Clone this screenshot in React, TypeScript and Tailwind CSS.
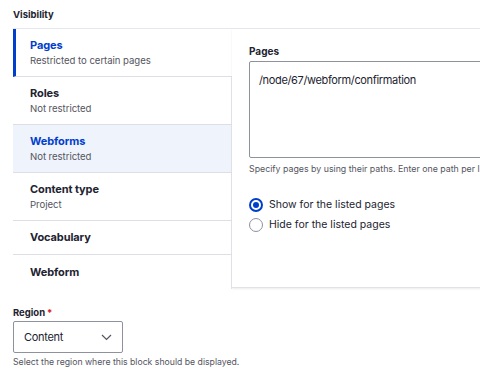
import React from 'react';

const tabs = [
  { title: 'Pages', summary: 'Restricted to certain pages', state: 'active' },
  { title: 'Roles', summary: 'Not restricted', state: '' },
  { title: 'Webforms', summary: 'Not restricted', state: 'hover' },
  { title: 'Content type', summary: 'Project', state: '' },
  { title: 'Vocabulary', summary: '', state: '' },
  { title: 'Webform', summary: '', state: '' },
];

export default function App() {
  return (
    <div
      className="h-[377px] w-[480px] overflow-hidden bg-white text-[#222330]"
      style={{ fontFamily: 'Inter, "Noto Sans", sans-serif' }}
    >
      <div className="pl-[13px] pt-[9px]">
        <div className="h-[19px] text-[9.5px] font-bold leading-[12px]">Visibility</div>

        <div className="flex border-t border-[#e6e7ec]">
          {/* Vertical tab menu */}
          <ul className="w-[219px] shrink-0">
            {tabs.map((tab, i) => {
              const hasSummary = tab.summary !== '';
              const last = i === tabs.length - 1;
              return (
                <li
                  key={tab.title}
                  className={
                    'flex flex-col justify-center ' +
                    (hasSummary ? 'h-[48px] ' : 'h-[34px] ') +
                    (last ? '' : 'border-b border-[#dedfe4] ') +
                    (tab.state === 'active'
                      ? 'border-l-[3px] border-l-[#003ecc] pl-[14px] bg-white'
                      : tab.state === 'hover'
                        ? 'border-r border-r-[#e6e7ec] bg-[#eff3fc] pl-[17px]'
                        : 'border-r border-r-[#e6e7ec] bg-white pl-[17px]')
                  }
                >
                  <span
                    className={
                      'text-[11px] font-bold leading-[15px] tracking-[-0.1px] ' +
                      (tab.state === 'active' || tab.state === 'hover' ? 'text-[#003ecc]' : 'text-[#222330]')
                    }
                  >
                    {tab.title}
                  </span>
                  {hasSummary && (
                    <span className="mt-[1px] text-[9.6px] leading-[14px] tracking-[-0.05px] text-[#545560]">
                      {tab.summary}
                    </span>
                  )}
                </li>
              );
            })}
          </ul>

          {/* Pane */}
          <div className="h-[259px] flex-1 border-b border-[#e1e2e7] bg-white pl-[17px] pt-[15px] shadow-[0_1px_2px_rgba(0,0,0,0.08)]">
            <div className="mb-[3px] text-[10px] font-bold leading-[14px]">Pages</div>
            <div className="h-[97px] w-[260px] rounded-[2px] border border-[#8e929c] px-[9px] pt-[10px] text-[11px] leading-[16px] tracking-[-0.35px] whitespace-nowrap">
              /node/67/webform/confirmation
            </div>
            <div className="mt-[4px] overflow-hidden whitespace-nowrap text-[8.8px] leading-[14px] text-[#545560]">
              Specify pages by using their paths. Enter one path per line.
            </div>

            <div className="mt-[22px] flex flex-col gap-[6px]">
              <label className="flex items-center gap-[6px]">
                <span className="flex h-[14px] w-[14px] items-center justify-center rounded-full border-[2px] border-[#003ecc]">
                  <span className="h-[6px] w-[6px] rounded-full bg-[#003ecc]" />
                </span>
                <span className="text-[10.5px] leading-[14px]">Show for the listed pages</span>
              </label>
              <label className="flex items-center gap-[6px]">
                <span className="h-[14px] w-[14px] rounded-full border border-[#8e929c] bg-white" />
                <span className="text-[10.5px] leading-[14px]">Hide for the listed pages</span>
              </label>
            </div>
          </div>
        </div>

        <div className="mt-[17px]">
          <div className="flex items-start text-[9.5px] font-bold leading-[14px]">
            Region
            <span className="ml-[2px] text-[#dc2323]">*</span>
          </div>
          <div className="mt-[1px] flex h-[32px] w-[110px] items-center justify-between rounded-[2px] border border-[#8e929c] pl-[10px] pr-[10px]">
            <span className="text-[11px] tracking-[-0.3px]">Content</span>
            <svg width="11" height="7" viewBox="0 0 11 7" fill="none">
              <path d="M1 1l4.5 4.5L10 1" stroke="#545560" strokeWidth="1.2" />
            </svg>
          </div>
          <div className="mt-[2px] text-[8.7px] leading-[14px] text-[#545560]">
            Select the region where this block should be displayed.
          </div>
        </div>
      </div>
    </div>
  );
}
